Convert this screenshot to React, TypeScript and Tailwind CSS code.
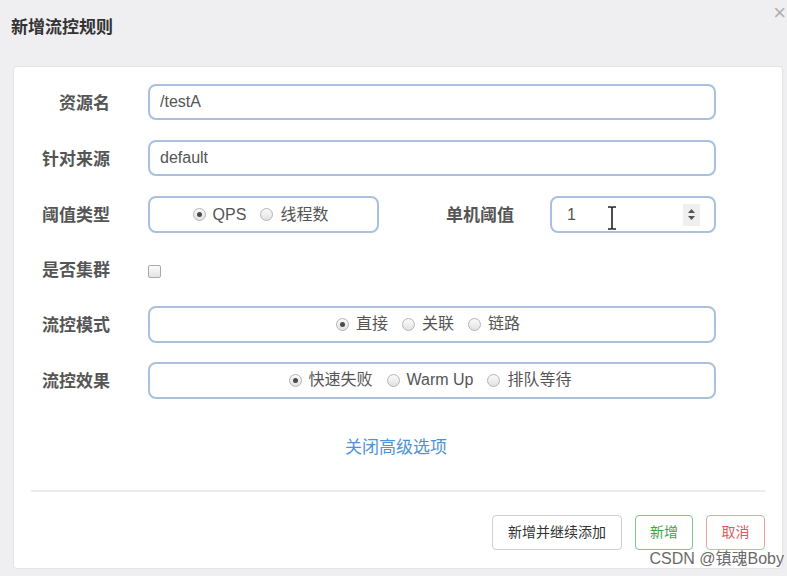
import React from "react";

const FONT = "'Liberation Sans','Noto Sans CJK SC',sans-serif";

function Radio({ checked, label }: { checked?: boolean; label: string }) {
  return (
    <span className="flex items-center gap-[7px]">
      <span className="w-[13px] h-[13px] rounded-full border border-[#b5b5b5] bg-gradient-to-b from-[#fafafa] to-[#e2e2e2] flex items-center justify-center">
        {checked && <span className="w-[5px] h-[5px] rounded-full bg-[#4a4a4a]" />}
      </span>
      <span className="text-[16px] leading-[20px] text-[#555]">{label}</span>
    </span>
  );
}

function Label({ children, w = "w-[96px]" }: { children: React.ReactNode; w?: string }) {
  return (
    <div className={`${w} shrink-0 text-right text-[17px] leading-[22px] font-bold text-[#555] pt-[3px]`}>{children}</div>
  );
}

export default function App() {
  return (
    <div className="relative w-full h-[576px] bg-[#efeff1] overflow-hidden" style={{ fontFamily: FONT }}>
      <div className="h-[66px] pl-[11px] pt-[17px] relative">
        <div className="text-[17px] leading-[22px] font-bold text-[#333]">新增流控规则</div>
        <div className="absolute right-[1px] top-[2px] text-[22px] leading-[22px] text-[#b0b0b0]">×</div>
      </div>

      <div className="ml-[13px] mr-[4px] h-[503px] bg-white border border-[#e4e4e6] rounded-[4px] flex flex-col">
        <div className="pt-[17px] pr-[66px] flex flex-col gap-[20px]">
          <div className="flex items-center h-[36px]">
            <Label>资源名</Label>
            <div className="ml-[38px] flex-1 h-[36px] border-2 border-[#a9c1de] rounded-[8px] flex items-center pl-[10px] text-[16px] text-[#555]">
              /testA
            </div>
          </div>
          <div className="flex items-center h-[36px]">
            <Label>针对来源</Label>
            <div className="ml-[38px] flex-1 h-[36px] border-2 border-[#a9c1de] rounded-[8px] flex items-center pl-[10px] text-[16px] text-[#555]">
              default
            </div>
          </div>
          <div className="flex items-center h-[37px]">
            <Label>阈值类型</Label>
            <div className="ml-[38px] w-[231px] h-[37px] border-2 border-[#a9c1de] rounded-[8px] flex items-center justify-center gap-[14px] pr-[6px]">
              <Radio checked label="QPS" />
              <Radio label="线程数" />
            </div>
            <Label w="w-[135px]">单机阈值</Label>
            <div className="relative ml-[36px] flex-1 h-[37px] border-2 border-[#a9c1de] rounded-[8px] flex items-center pl-[15px] pr-[14px] text-[16px] text-[#555]">
              <span className="flex-1">1</span>
              <span className="w-[17px] h-[22px] bg-[#efefef] flex items-center justify-center">
                <svg width="9" height="13" viewBox="0 0 9 13">
                  <path d="M4.5 1 L8 5 L1 5 Z" fill="#555" />
                  <path d="M4.5 12 L8 8 L1 8 Z" fill="#555" />
                </svg>
              </span>
              <svg className="absolute left-[54px] top-[7px]" width="12" height="26" viewBox="0 0 12 26">
                <path d="M2 2 H5 Q6 2 6 3 Q6 2 7 2 H10 M6 3 V23 M2 24 H5 Q6 24 6 23 Q6 24 7 24 H10" stroke="#fff" strokeWidth="3.5" fill="none" />
                <path d="M2 2 H5 Q6 2 6 3 Q6 2 7 2 H10 M6 3 V23 M2 24 H5 Q6 24 6 23 Q6 24 7 24 H10" stroke="#222" strokeWidth="1.6" fill="none" />
              </svg>
            </div>
          </div>
          <div className="flex items-center h-[33px]">
            <Label>是否集群</Label>
            <div className="ml-[38px] mt-[3px] w-[13px] h-[13px] rounded-[2px] border border-[#aaa] bg-gradient-to-b from-[#fbfbfb] to-[#e4e4e4]" />
          </div>
          <div className="flex items-center h-[36px]">
            <Label>流控模式</Label>
            <div className="ml-[38px] flex-1 h-[37px] border-2 border-[#a9c1de] rounded-[8px] flex items-center justify-center gap-[14px] pr-[8px]">
              <Radio checked label="直接" />
              <Radio label="关联" />
              <Radio label="链路" />
            </div>
          </div>
          <div className="flex items-center h-[36px]">
            <Label>流控效果</Label>
            <div className="ml-[38px] flex-1 h-[37px] border-2 border-[#a9c1de] rounded-[8px] flex items-center justify-center gap-[14px] pr-[4px]">
              <Radio checked label="快速失败" />
              <Radio label="Warm Up" />
              <Radio label="排队等待" />
            </div>
          </div>
        </div>

        <div className="mt-[38px] h-[24px] flex justify-center pr-[4px]">
          <span className="text-[17px] leading-[24px] text-[#4d94d6]">关闭高级选项</span>
        </div>

        <div className="mt-[30px] mx-[17px] h-[2px] bg-[#ececec]" />

        <div className="mt-[23px] mr-[17px] flex justify-end gap-[13px]">
          <button className="w-[130px] h-[35px] border border-[#cfcfcf] rounded-[4px] text-[14px] text-[#333] bg-white">
            新增并继续添加
          </button>
          <button className="w-[58px] h-[35px] border border-[#7fc28d] rounded-[4px] text-[14px] text-[#3fa34d] bg-white">
            新增
          </button>
          <button className="w-[59px] h-[35px] border border-[#eaa6a6] rounded-[4px] text-[14px] text-[#e05b5b] bg-white">
            取消
          </button>
        </div>
      </div>

      <div className="absolute right-[3px] bottom-[7px] text-[16px] leading-[20px] text-[#6a6a6a]">CSDN @镇魂Boby</div>
    </div>
  );
}
